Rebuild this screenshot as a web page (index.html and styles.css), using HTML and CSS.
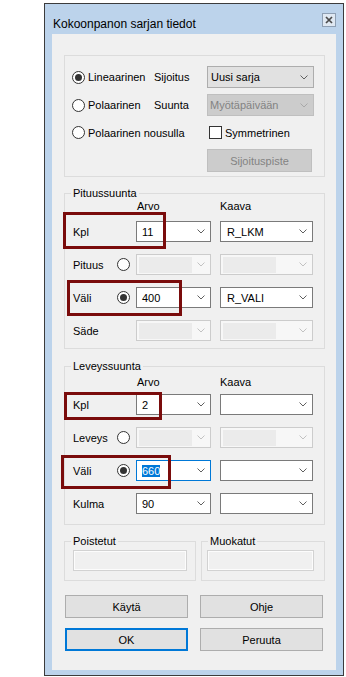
FILE: index.html
```html
<!DOCTYPE html>
<html lang="fi">
<head>
    <meta charset="UTF-8">
    <meta name="viewport" content="width=device-width, initial-scale=1.0">
    <title>Kokoonpanon sarjan tiedot</title>
    <link rel="stylesheet" href="styles.css">
</head>
<body>

<div class="window">
    <div class="titlebar">
        <span class="title">Kokoonpanon sarjan tiedot</span>
        <span class="close">
            <svg width="8" height="8" viewBox="0 0 8 8"><path d="M1 1L7 7M7 1L1 7" stroke="#4a4a4a" stroke-width="1.7" fill="none"/></svg>
        </span>
    </div>

    <div class="client">
        <!-- sarjan tyyppi -->
        <div class="mode">
            <label class="opt"><span class="radio on"></span>Lineaarinen</label>
            <span>Sijoitus</span>
            <div class="combo list"><span class="val">Uusi sarja</span><svg class="chev" width="8" height="5" viewBox="0 0 8 5"><path d="M0.5 0.5L4 4L7.5 0.5"/></svg></div>

            <label class="opt"><span class="radio"></span>Polaarinen</label>
            <span>Suunta</span>
            <div class="combo list off"><span class="val">Myötäpäivään</span><svg class="chev" width="8" height="5" viewBox="0 0 8 5"><path d="M0.5 0.5L4 4L7.5 0.5"/></svg></div>

            <label class="opt wide"><span class="radio"></span>Polaarinen nousulla</label>
            <label class="check"><span class="box"></span>Symmetrinen</label>

            <button class="btn off place" type="button">Sijoituspiste</button>
        </div>

        <fieldset class="group g-len">
            <legend>Pituussuunta</legend>
            <div class="head"><span></span><span></span><span class="arvo">Arvo</span><span>Kaava</span></div>
            <div class="rows">
                <span>Kpl</span><span></span>
                <div class="combo c1"><span class="val">11</span><svg class="chev" width="8" height="5" viewBox="0 0 8 5"><path d="M0.5 0.5L4 4L7.5 0.5"/></svg></div>
                <div class="combo c2"><span class="val">R_LKM</span><svg class="chev" width="8" height="5" viewBox="0 0 8 5"><path d="M0.5 0.5L4 4L7.5 0.5"/></svg></div>

                <span>Pituus</span><span class="radio"></span>
                <div class="combo c1 off"><span class="field"></span><svg class="chev" width="8" height="5" viewBox="0 0 8 5"><path d="M0.5 0.5L4 4L7.5 0.5"/></svg></div>
                <div class="combo c2 off"><span class="field"></span><svg class="chev" width="8" height="5" viewBox="0 0 8 5"><path d="M0.5 0.5L4 4L7.5 0.5"/></svg></div>

                <span>Väli</span><span class="radio on"></span>
                <div class="combo c1"><span class="val">400</span><svg class="chev" width="8" height="5" viewBox="0 0 8 5"><path d="M0.5 0.5L4 4L7.5 0.5"/></svg></div>
                <div class="combo c2"><span class="val">R_VALI</span><svg class="chev" width="8" height="5" viewBox="0 0 8 5"><path d="M0.5 0.5L4 4L7.5 0.5"/></svg></div>

                <span>Säde</span><span></span>
                <div class="combo c1 off"><span class="field"></span><svg class="chev" width="8" height="5" viewBox="0 0 8 5"><path d="M0.5 0.5L4 4L7.5 0.5"/></svg></div>
                <div class="combo c2 off"><span class="field"></span><svg class="chev" width="8" height="5" viewBox="0 0 8 5"><path d="M0.5 0.5L4 4L7.5 0.5"/></svg></div>
            </div>
        </fieldset>

        <fieldset class="group g-wid">
            <legend>Leveyssuunta</legend>
            <div class="head"><span></span><span></span><span class="arvo">Arvo</span><span>Kaava</span></div>
            <div class="rows">
                <span>Kpl</span><span></span>
                <div class="combo c1"><span class="val">2</span><svg class="chev" width="8" height="5" viewBox="0 0 8 5"><path d="M0.5 0.5L4 4L7.5 0.5"/></svg></div>
                <div class="combo c2"><span class="val"></span><svg class="chev" width="8" height="5" viewBox="0 0 8 5"><path d="M0.5 0.5L4 4L7.5 0.5"/></svg></div>

                <span>Leveys</span><span class="radio"></span>
                <div class="combo c1 off"><span class="field"></span><svg class="chev" width="8" height="5" viewBox="0 0 8 5"><path d="M0.5 0.5L4 4L7.5 0.5"/></svg></div>
                <div class="combo c2 off"><span class="field"></span><svg class="chev" width="8" height="5" viewBox="0 0 8 5"><path d="M0.5 0.5L4 4L7.5 0.5"/></svg></div>

                <span>Väli</span><span class="radio on"></span>
                <div class="combo c1 focus"><span class="val"><span class="sel">660</span></span><svg class="chev" width="8" height="5" viewBox="0 0 8 5"><path d="M0.5 0.5L4 4L7.5 0.5"/></svg></div>
                <div class="combo c2"><span class="val"></span><svg class="chev" width="8" height="5" viewBox="0 0 8 5"><path d="M0.5 0.5L4 4L7.5 0.5"/></svg></div>

                <span>Kulma</span><span></span>
                <div class="combo c1"><span class="val">90</span><svg class="chev" width="8" height="5" viewBox="0 0 8 5"><path d="M0.5 0.5L4 4L7.5 0.5"/></svg></div>
                <div class="combo c2"><span class="val"></span><svg class="chev" width="8" height="5" viewBox="0 0 8 5"><path d="M0.5 0.5L4 4L7.5 0.5"/></svg></div>
            </div>
        </fieldset>

        <div class="extra">
            <fieldset class="group g-del">
                <legend>Poistetut</legend>
                <div class="textbox"></div>
            </fieldset>
            <fieldset class="group g-mod">
                <legend>Muokatut</legend>
                <div class="textbox"></div>
            </fieldset>
        </div>

        <div class="buttons">
            <button class="btn" type="button">Käytä</button>
            <button class="btn" type="button">Ohje</button>
            <button class="btn default" type="button">OK</button>
            <button class="btn" type="button">Peruuta</button>
        </div>

        <!-- merkinnät -->
        <div class="mark mark-1"></div>
        <div class="mark mark-2"></div>
        <div class="mark mark-3"></div>
        <div class="mark mark-4"></div>
    </div>
</div>

</body>
</html>
```

FILE: styles.css
```css
body {
    margin: 0;
    background: #fff;
    font-family: "Liberation Sans", Arial, sans-serif;
    font-size: 11px;
    color: #000;
}
.window {
    box-sizing: border-box;
    width: 300px;
    margin: 3px 0 0 44px;
    border: 1px solid #3c3c3c;
    background: #bcd3eb;
    padding: 0 7px 5px;
}
.titlebar {
    height: 30px;
    display: flex;
    justify-content: space-between;
    align-items: flex-start;
}
.title {
    font-size: 12px;
    line-height: 14px;
    margin-top: 13px;
    margin-left: 1px;
}
.close {
    box-sizing: border-box;
    width: 14px;
    height: 14px;
    margin-top: 9px;
    border: 1px solid #8e9fb3;
    background: #dfe8f2;
    display: flex;
    align-items: center;
    justify-content: center;
}
.client {
    position: relative;
    box-sizing: border-box;
    height: 636px;
    background: #f0f0f0;
    padding: 21px 0 0 12px;
}

/* top box */
.mode {
    box-sizing: border-box;
    width: 261px;
    height: 122px;
    border: 1px solid #dcdcdc;
    padding: 10px 0 0 7px;
    display: grid;
    grid-template-columns: 82px 53px 107px;
    grid-template-rows: 22px 22px 21px 23px;
    row-gap: 6px;
    align-items: center;
}
.opt {
    display: flex;
    align-items: center;
}
.opt.wide {
    grid-column: 1 / 3;
}
.radio {
    box-sizing: border-box;
    width: 13px;
    height: 13px;
    border: 1px solid #333;
    border-radius: 50%;
    background: #fff;
    margin-right: 3px;
    display: flex;
    align-items: center;
    justify-content: center;
}
.radio.on::after {
    content: "";
    width: 7px;
    height: 7px;
    border-radius: 50%;
    background: #333;
}
.check {
    display: flex;
    align-items: center;
}
.check .box {
    box-sizing: border-box;
    width: 13px;
    height: 13px;
    border: 1px solid #333;
    background: #fff;
    margin: 0 3px 0 2px;
}
.place {
    grid-column: 3;
    width: 105px;
    margin-left: 1px;
}

/* combos */
.combo {
    box-sizing: border-box;
    height: 21px;
    display: flex;
    align-items: center;
    background: #fff;
    border: 1px solid #7a7a7a;
    padding: 0 5px 0 5px;
}
.combo .val {
    flex: 1;
    white-space: nowrap;
}
.chev {
    fill: none;
    stroke: #606060;
    stroke-width: 1;
    flex-shrink: 0;
}
.combo.list {
    height: 22px;
    background: #e1e1e1;
    border-color: #adadad;
    padding-left: 3px;
}
.combo.list.off {
    background: #cccccc;
    border-color: #bfbfbf;
    color: #838383;
}
.combo.list.off .chev {
    stroke: #a8a8a8;
}
.combo.off {
    border-color: #cccccc;
    background: #f7f7f7;
    padding-left: 2px;
}
.combo .field {
    width: 53px;
    height: 16px;
    background: #ebebeb;
    margin-right: auto;
}
.combo.off .chev {
    stroke: #c2c2c2;
}
.combo.focus {
    border-color: #0078d7;
}
.sel {
    background: #0078d7;
    color: #fff;
}
.c1 {
    width: 75px;
}
.c2 {
    width: 93px;
    padding-left: 6px;
}

/* groups */
.group {
    box-sizing: border-box;
    width: 261px;
    min-width: 0;
    margin: 0;
    border: 1px solid #dcdcdc;
    padding: 0 0 7px 6px;
}
.group legend {
    padding: 0 2px;
    line-height: 13px;
}
.head, .rows {
    display: grid;
    grid-template-columns: 44px 19px 84px 93px;
    margin-left: 2px;
    align-items: center;
}
.head {
    height: 13px;
    line-height: 13px;
}
.head .arvo {
    padding-left: 1px;
}
.rows {
    grid-auto-rows: 21px;
    row-gap: 12px;
}
.g-len {
    margin-top: 10px;
}
.g-len .rows {
    margin-top: 8px;
}
.g-wid {
    margin-top: 11px;
    padding-bottom: 10px;
}
.g-wid .head {
    margin-top: 3px;
}
.g-wid .rows {
    margin-top: 5px;
}

.extra {
    display: flex;
    gap: 5px;
    margin-top: 10px;
}
.extra .group {
    padding-bottom: 9px;
}
.g-del {
    width: 132px;
}
.g-mod {
    width: 124px;
}
.textbox {
    box-sizing: border-box;
    height: 21px;
    margin-top: 2px;
    border: 1px solid #d2d2d2;
    box-shadow: inset 0 0 0 1px #fcfcfc;
    background: #f0f0f0;
}
.g-del .textbox {
    width: 114px;
    margin-left: 2px;
}
.g-mod .textbox {
    width: 107px;
    margin-left: -1px;
}

/* buttons */
.btn {
    box-sizing: border-box;
    height: 23px;
    margin: 0;
    padding: 0;
    background: #e1e1e1;
    border: 1px solid #adadad;
    font-family: inherit;
    font-size: 11px;
    color: #000;
}
.btn.off {
    background: #cccccc;
    border-color: #bfbfbf;
    color: #838383;
}
.btn.default {
    border: 2px solid #0078d7;
}
.buttons {
    display: grid;
    grid-template-columns: 123px 123px;
    column-gap: 12px;
    row-gap: 10px;
    margin: 14px 0 0 1px;
}

/* red annotation frames */
.mark {
    position: absolute;
    box-sizing: border-box;
    border: 3px solid #7a0c0c;
}
.mark-1 { left: 11px; top: 178px; width: 103px; height: 37px; }
.mark-2 { left: 15px; top: 246px; width: 115px; height: 36px; }
.mark-3 { left: 12px; top: 358px; width: 98px; height: 28px; }
.mark-4 { left: 9px; top: 421px; width: 110px; height: 34px; }
```
